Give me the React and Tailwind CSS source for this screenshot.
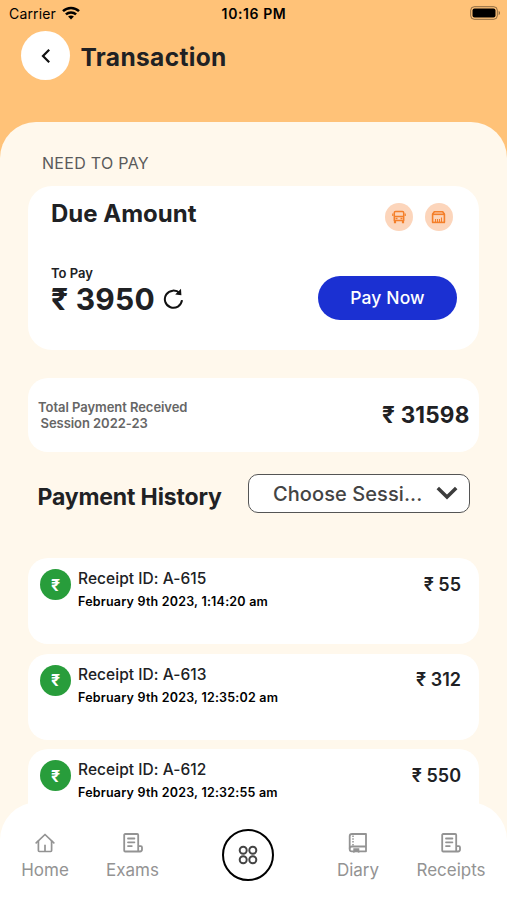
import React from "react";

const receipts = [
  { id: "A-615", date: "February 9th 2023, 1:14:20 am", amount: 55 },
  { id: "A-613", date: "February 9th 2023, 12:35:02 am", amount: 312 },
  { id: "A-612", date: "February 9th 2023, 12:32:55 am", amount: 550 },
];

const HomeIcon = () => (
  <svg width="20" height="20" viewBox="0 0 20 20" fill="none" stroke="currentColor" strokeWidth="1.7" strokeLinecap="round" strokeLinejoin="round">
    <path d="M1.2 9.8 10 1.5l8.8 8.3" />
    <path d="M3.4 8.2v9.4c0 .5.4.9.9.9h11.4c.5 0 .9-.4.9-.9V8.2" />
    <path d="M10 18.2v-5.8" />
  </svg>
);

const ReceiptIcon = () => (
  <svg width="20" height="20" viewBox="0 0 20 20" fill="none" stroke="currentColor" strokeWidth="1.8" strokeLinecap="round" strokeLinejoin="round">
    <path d="M15.2 13V2c0-.6-.4-1-1-1H2.2c-.6 0-1 .4-1 1v15.5c0 .6.4 1 1 1H17c1.1 0 2-.8 2-1.900v-2.200c0-.8-.5-1.200-1.200-1.200h-2.600v5" />
    <path d="M5 5.5h6.4M5 9.3h6.4M5 13.100h3.800" />
  </svg>
);

const DiaryIcon = () => (
  <svg width="20" height="20" viewBox="0 0 20 20" fill="none" stroke="currentColor" strokeWidth="1.8" strokeLinejoin="round">
    <path d="M18 1H4C2.6 1 1.7 1.9 1.7 3.200v13c0 1.200.9 2.100 2.100 2.100H18V1Z" />
    <path d="M18 13.5H4c-1.300 0-2.300.8-2.300 2" />
    <path d="M5 2.500V13.500" strokeWidth="1.5" strokeDasharray="1.5 1.3" />
    <path d="M5.300 15.200h6V20l-3-1.500-3 1.500Z" fill="currentColor" stroke="none" />
  </svg>
);

const BusIcon = () => (
  <svg width="14" height="14" viewBox="0 0 14 14" fill="none" stroke="currentColor" strokeWidth="1.5" strokeLinejoin="round">
    <path d="M2.300 10.500V2.700c0-.8.500-1.300 1.300-1.300h6.800c.8 0 1.300.5 1.300 1.300v7.800Z" />
    <path d="M2.300 6.500h9.400" />
    <path d="M.8 3.500v2.600M13.200 3.500v2.600" strokeWidth="1.2" />
    <path d="M3 10.500v2.800M11 10.500v2.800" strokeWidth="2.2" />
    <path d="M3.500 8.500h2M8.500 8.500h2" />
  </svg>
);

const HostelIcon = () => (
  <svg width="15" height="14" viewBox="0 0 15 14" fill="none" stroke="currentColor" strokeWidth="1.6" strokeLinejoin="round">
    <path d="M1.600 12.600V4.200l1.700-2.500h8.400l1.700 2.500v8.400" />
    <path d="M1 4.300h13" />
    <path d="M4.500 12V9M6.500 12V9M8.500 12V9M10.500 12V7.500" strokeWidth="1.1" />
    <path d="M1 12.400h13" />
  </svg>
);

const StatusBar = () => {
  return (
    <div className="grid h-7 grid-cols-3 items-center pl-[9px] pr-[6px] text-sm text-black">
      <div className="flex items-center gap-[6px]">
        <span className="tracking-[0.15px]">Carrier</span>
        <svg className="-mt-[2px]" width="18" height="14" viewBox="0 0 18 14" fill="none" stroke="#000" strokeWidth="2.5">
          <path d="M1 5.200c4.500-4.300 11.500-4.300 16 0" />
          <path d="M3.900 8.400c2.900-2.700 7.300-2.700 10.200 0" />
          <path d="M9 13.600 6.100 10.600c1.700-1.500 4.100-1.500 5.800 0Z" fill="#000" stroke="none" />
        </svg>
      </div>
      <div className="-ml-[2px] text-center font-semibold tracking-[0.6px] whitespace-nowrap">10:16 PM</div>
      <svg className="mt-[-2px] justify-self-end" width="31" height="14" viewBox="0 0 31 14">
        <rect x="0.7" y="0.7" width="26.6" height="12.6" rx="3.6" fill="none" stroke="#000" strokeOpacity="0.45" />
        <rect x="2.5" y="2.5" width="23" height="9" rx="2" fill="#000" />
        <path d="M28.700 4.800v4.400c1.700-.8 1.700-3.600 0-4.400Z" fill="#000" fillOpacity="0.5" />
      </svg>
    </div>
  );
};

const Header = () => {
  return (
    <div className="flex h-[93.5px] gap-[10.5px] pt-[3px] pl-[21px]">
      <button className="flex h-[49px] w-[49px] items-center justify-center rounded-full bg-white">
        <svg width="10" height="16" viewBox="0 0 10 16" fill="none" stroke="#111" strokeWidth="2.2">
          <path d="M8.200 1.800 2 8l6.200 6.200" />
        </svg>
      </button>
      <h1 className="pt-px text-[24.5px] leading-[50px] font-bold tracking-[0.35px] text-[#202124]">Transaction</h1>
    </div>
  );
};

const DueCard = () => {
  return (
    <div className="h-[164px] rounded-[24px] bg-white pl-[23px]">
      <div className="flex justify-between pr-[26.5px]">
        <h2 className="pt-[12px] text-2xl font-bold">Due Amount</h2>
        <div className="flex gap-3 pt-[17px] text-[#f47f2a]">
          <span className="flex h-7 w-7 items-center justify-center rounded-full bg-[#fcd5bb]">
            <BusIcon />
          </span>
          <span className="flex h-7 w-7 items-center justify-center rounded-full bg-[#fcd5bb]">
            <HostelIcon />
          </span>
        </div>
      </div>
      <div className="flex justify-between pr-[22px] pt-[34px]">
        <div>
          <p className="text-[13px] leading-4 font-semibold">To Pay</p>
          <div className="flex items-center gap-2">
            <span className="text-[30px] leading-[37px] font-bold tracking-[0.25px]">₹ 3950</span>
            <svg className="-mt-px" width="21" height="22" viewBox="0 0 21 22" fill="none" stroke="#111" strokeWidth="2">
              <path d="M19 12.200A8.600 8.600 0 1 1 16.800 5.400" />
              <path d="m18 .8.400 6.500-6.200-.9Z" fill="#111" stroke="none" />
            </svg>
          </div>
        </div>
        <button className="mt-[11px] h-11 w-[139px] rounded-full bg-[#1b30d2] text-[17.5px] font-medium tracking-[0.1px] text-white">
          Pay Now
        </button>
      </div>
    </div>
  );
};

const ReceiptCard = ({ receipt }) => {
  return (
    <div className="flex h-[86px] rounded-[20px] bg-white pl-3 pr-[18px]">
      <span className="mt-[11px] flex h-[31px] w-[31px] items-center justify-center rounded-full bg-[#289d3b] text-base font-bold text-white">
        ₹
      </span>
      <div className="flex-1 pt-[10px] pl-[7px]">
        <p className="text-[15.5px] leading-[22px] font-medium tracking-[0.05px]">Receipt ID: {receipt.id}</p>
        <p className="pt-[3px] text-[12.5px] leading-[18px] font-semibold tracking-[0.21px] text-black">{receipt.date}</p>
      </div>
      <p className="pt-[14.5px] text-lg leading-6 font-semibold">₹ {receipt.amount}</p>
    </div>
  );
};

const NavItem = ({ label, children }) => (
  <div className="flex flex-col items-center gap-[5px]">
    {children}
    <span className="text-[17px] leading-6">{label}</span>
  </div>
);

const BottomNav = () => {
  return (
    <div className="absolute inset-x-0 bottom-0 flex h-[98px] rounded-t-[38px] bg-white pt-[31px] pl-[21px] text-[#939393]">
      <div className="w-[48px]">
        <NavItem label="Home">
          <HomeIcon />
        </NavItem>
      </div>
      <div className="ml-[37px] w-[53px]">
        <NavItem label="Exams">
          <ReceiptIcon />
        </NavItem>
      </div>
      <button className="-mt-[4px] ml-[63px] flex h-[52px] w-[52px] items-center justify-center rounded-full border-2 border-black">
        <svg width="20" height="20" viewBox="0 0 20 20" fill="none" stroke="#444" strokeWidth="2">
          <circle cx="5.2" cy="5.2" r="3.5" />
          <circle cx="14.8" cy="5.2" r="3.5" />
          <circle cx="5.2" cy="14.8" r="3.5" />
          <circle cx="14.8" cy="14.8" r="3.5" />
        </svg>
      </button>
      <div className="ml-[63px] w-[42px]">
        <NavItem label="Diary">
          <DiaryIcon />
        </NavItem>
      </div>
      <div className="ml-[37px] w-[70px]">
        <NavItem label="Receipts">
          <ReceiptIcon />
        </NavItem>
      </div>
    </div>
  );
};

export default function App() {
  return (
    <div className="relative h-[900px] w-[507px] overflow-hidden bg-[#ffc278] font-['Inter',sans-serif] text-[#202124]">
      <StatusBar />
      <Header />
      <div className="h-[779px] rounded-t-[36px] bg-[#fff8ec] px-7 pt-[29.5px]">
        <p className="pl-[14px] pb-[11px] text-base tracking-[0.3px] text-[#5a5a5a]">NEED TO PAY</p>
        <DueCard />

        <div className="mt-7 flex h-[74px] items-center justify-between rounded-[20px] bg-white pl-[10px] pr-[9.5px]">
          <div className="text-[13px] leading-4 font-semibold tracking-[-0.05px] text-[#666]">
            <p>Total Payment Received</p>
            <p className="pl-[2.5px]">Session 2022-23</p>
          </div>
          <p className="text-[22.5px] font-bold tracking-[0.2px]">₹ 31598</p>
        </div>

        <div className="mt-[22px] flex h-[39px] justify-between pl-[9.5px] pr-[9px]">
          <h2 className="pt-[7px] text-[23px] leading-8 font-bold tracking-[-0.15px] whitespace-nowrap">Payment History</h2>
          <button className="flex w-[222px] items-center justify-between rounded-[10px] border border-[#555] bg-white pl-6 pr-[11px] text-[#444]">
            <span className="text-xl font-medium tracking-[0.08px]">Choose Sessi...</span>
            <svg className="-mt-[2px]" width="22" height="14" viewBox="0 0 22 14" fill="none" stroke="#3c3c3c" strokeWidth="3.5">
              <path d="m1.800 2 9.200 9 9.200-9" />
            </svg>
          </button>
        </div>

        <div className="flex flex-col gap-[9.7px] pt-[45px]">
          {receipts.map((receipt) => (
            <ReceiptCard key={receipt.id} receipt={receipt} />
          ))}
        </div>
      </div>
      <BottomNav />
    </div>
  );
}
